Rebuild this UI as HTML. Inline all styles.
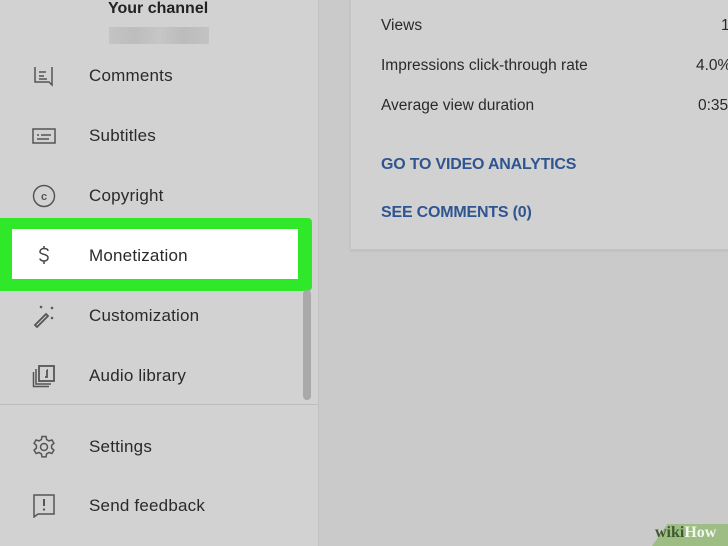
<!DOCTYPE html>
<html><head><meta charset="utf-8"><style>
html,body{margin:0;width:728px;height:546px;overflow:hidden}
body{background:#cacaca;font-family:"Liberation Sans",sans-serif;position:relative}
.side{position:absolute;left:0;top:0;width:318px;height:546px;background:#d2d2d2;border-right:1px solid #c2c2c2}
.item{position:absolute;left:0;width:318px;height:40px;display:flex;align-items:center}
.item svg{position:absolute;left:32px;top:8px;width:24px;height:24px;fill:none;stroke:#555;stroke-width:1.5}
.item span{position:absolute;left:89px;font-size:17px;color:#2a2a2a;letter-spacing:0.2px}
.card{position:absolute;left:350px;top:-5px;width:400px;height:253px;background:#d1d1d1;border:1px solid #c4c4c4;box-shadow:0 1px 2px rgba(0,0,0,.08)}
.row{position:absolute;left:30px;font-size:15.5px;color:#2a2a2a}
.val{position:absolute;font-size:15.5px;color:#2a2a2a}
.lnk{position:absolute;left:30px;font-size:16px;color:#2f5590;font-weight:bold;letter-spacing:-0.2px}
</style></head><body>
<div class="side">
<div style="position:absolute;left:108px;top:0;font-size:16px;font-weight:bold;color:#222">Your channel</div>
<div style="position:absolute;left:109px;top:27px;width:100px;height:17px;background:linear-gradient(90deg,#c4c4c4,#bdbdbd,#c6c6c6,#bcbcbc,#c3c3c3)"></div>
<div class="item" style="top:56px"><svg viewBox="0 0 24 24"><path d="M3 3v15h14l3 3V3"/><path d="M7 8h7M7 12h5M7 15h8"/></svg><span>Comments</span></div>
<div class="item" style="top:116px"><svg viewBox="0 0 24 24"><rect x="1" y="5" width="22" height="14"/><path d="M5 11h2M9 11h10M5 15h12"/></svg><span>Subtitles</span></div>
<div class="item" style="top:176px"><svg viewBox="0 0 24 24"><circle cx="12" cy="12" r="10.5"/><text x="12" y="16" font-size="11" text-anchor="middle" fill="#555" stroke="none" font-family="Liberation Sans" font-weight="bold">c</text></svg><span>Copyright</span></div>
<div style="position:absolute;left:0;top:218px;width:312px;height:73px;background:#2fe82a;border-radius:0 4px 4px 0"></div>
<div style="position:absolute;left:12px;top:229px;width:286px;height:50px;background:#fff"></div>
<div class="item" style="top:236px"><svg viewBox="0 0 24 24" style="stroke:#444"><path d="M16 7c0-2-2-2.5-4-2.5S8 5.5 8 8s8 2 8 5.5-3 3.5-4 3.5-4-.5-4-2.5M12 2v2.5M12 17v3"/></svg><span>Monetization</span></div>
<div class="item" style="top:296px"><svg viewBox="0 0 24 24"><path d="M3 21l11-11 2 2-11 11z" stroke-width="1.8"/><path d="M8 2l2 2M10 2L8 4M19 3l2 2M21 3l-2 2M19 13l2 2M21 13l-2 2" stroke-width="1.2"/></svg><span>Customization</span></div>
<div class="item" style="top:356px"><svg viewBox="0 0 24 24"><rect x="7" y="2" width="15" height="15" stroke-width="1.8"/><path d="M4 5v15h15M1.5 8v14.5H17"/><path d="M15 6v7h-2M15 6h1" stroke-width="1.8"/></svg><span>Audio library</span></div>
<div style="position:absolute;left:303px;top:290px;width:8px;height:110px;background:#a9a9a9;border-radius:4px"></div>
<div style="position:absolute;left:0;top:404px;width:318px;height:1px;background:#bdbdbd"></div>
<div class="item" style="top:427px"><svg viewBox="0 0 24 24"><path d="M10 1.5h4l.6 3 2.4 1.4 2.9-1 2 3.4-2.3 2v2.8l2.3 2-2 3.4-2.9-1-2.4 1.4-.6 3h-4l-.6-3L7 17.5l-2.9 1-2-3.4 2.3-2v-2.8l-2.3-2 2-3.4 2.9 1L9.4 4.5z"/><circle cx="12" cy="12" r="3.5"/></svg><span>Settings</span></div>
<div class="item" style="top:486px"><svg viewBox="0 0 24 24"><path d="M2 23V1h20v19H6z"/><path d="M12 5v7M12 14.5v2" stroke-width="2"/></svg><span>Send feedback</span></div>
</div>
<div class="card">
<div class="row" style="top:21px">Views</div><div class="val" style="left:370px;top:21px">1</div>
<div class="row" style="top:61px">Impressions click-through rate</div><div class="val" style="left:345px;top:61px">4.0%</div>
<div class="row" style="top:101px">Average view duration</div><div class="val" style="left:347px;top:101px">0:35</div>
<div class="lnk" style="top:160px">GO TO VIDEO ANALYTICS</div>
<div class="lnk" style="top:208px">SEE COMMENTS (0)</div>
</div>
<div style="position:absolute;left:652px;top:524px;width:110px;height:22px;background:#9dbd85;transform:skewX(-35deg);transform-origin:bottom left"></div>
<div style="position:absolute;left:655px;top:524px;font-family:'Liberation Serif',serif;font-weight:bold;font-size:16px"><span style="color:#3d5a2c">wiki</span><span style="color:#f2f7ee">How</span></div>
</body></html>
